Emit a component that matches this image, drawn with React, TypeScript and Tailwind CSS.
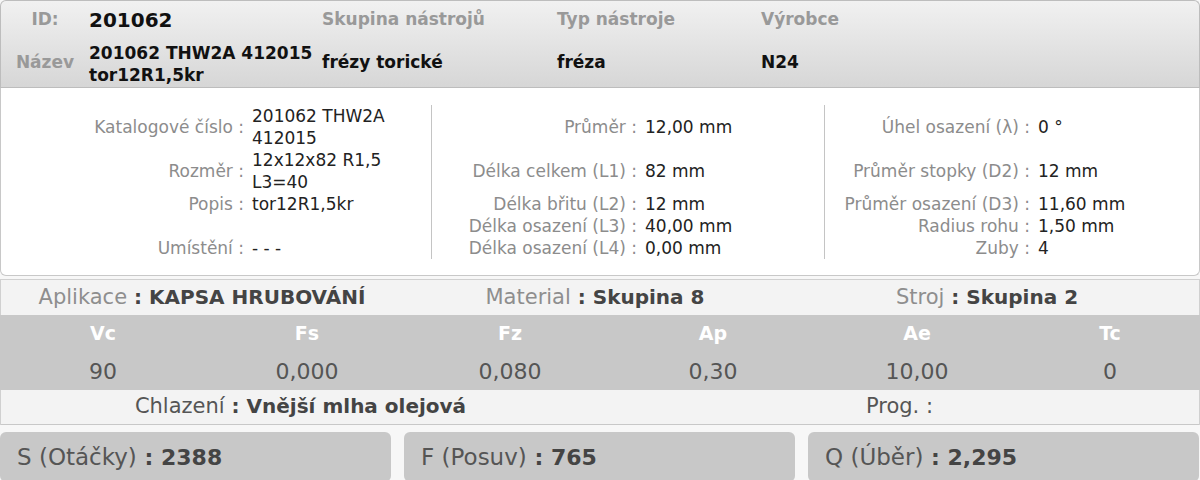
import React from 'react';

type Row = { label: string; value: string } | null;

const col1: Row[] = [
  { label: 'Katalogové číslo', value: '201062 THW2A 412015' },
  { label: 'Rozměr', value: '12x12x82 R1,5 L3=40' },
  { label: 'Popis', value: 'tor12R1,5kr' },
  null,
  { label: 'Umístění', value: '- - -' },
];

const col2: Row[] = [
  { label: 'Průměr', value: '12,00 mm' },
  { label: 'Délka celkem (L1)', value: '82 mm' },
  { label: 'Délka břitu (L2)', value: '12 mm' },
  { label: 'Délka osazení (L3)', value: '40,00 mm' },
  { label: 'Délka osazení (L4)', value: '0,00 mm' },
];

const col3: Row[] = [
  { label: 'Úhel osazení (λ)', value: '0 °' },
  { label: 'Průměr stopky (D2)', value: '12 mm' },
  { label: 'Průměr osazení (D3)', value: '11,60 mm' },
  { label: 'Radius rohu', value: '1,50 mm' },
  { label: 'Zuby', value: '4' },
];

const params = [
  { k: 'Vc', v: '90' },
  { k: 'Fs', v: '0,000' },
  { k: 'Fz', v: '0,080' },
  { k: 'Ap', v: '0,30' },
  { k: 'Ae', v: '10,00' },
  { k: 'Tc', v: '0' },
];

const DetailColumn = ({ rows, cols, border }: { rows: Row[]; cols: string; border?: boolean }) => (
  <div className={`grid ${cols} grid-rows-[44px_44px_22px_22px_22px] ${border ? 'border-l border-[#c4c4c4]' : ''}`}>
    {rows.map((r, i) =>
      r ? (
        <React.Fragment key={i}>
          <div className="flex items-center justify-end text-[#8c8c8c] whitespace-nowrap leading-[22px]">{r.label} :</div>
          <div className="flex items-center pl-2 text-[#222] leading-[22px]">
            <span className="max-w-[170px]">{r.value}</span>
          </div>
        </React.Fragment>
      ) : (
        <React.Fragment key={i}>
          <div />
          <div />
        </React.Fragment>
      )
    )}
  </div>
);

// label + bold colon + bold value, as in the lower part
const Pair = ({ label, value, labelClass }: { label: string; value?: string; labelClass: string }) => (
  <span className="whitespace-nowrap">
    <span className={labelClass}>{label}</span>
    <span className="font-bold"> : </span>
    {value && <span className="font-bold">{value}</span>}
  </span>
);

export default function App() {
  return (
    <div className="w-[1200px] bg-[#f7f7f7] font-['DejaVu_Sans',sans-serif] text-[17px]">
      {/* Header */}
      <div className="rounded-t-[6px] border border-b-0 border-[#bdbdbd] bg-gradient-to-b from-[#f1f1f1] to-[#d6d6d6] font-bold">
        <div className="grid grid-cols-[88px_233px_235px_204px_1fr] h-[38px] items-center">
          <div className="text-center text-[#999]">ID:</div>
          <div className="text-[20px] text-[#111]">201062</div>
          <div className="text-[#999]">Skupina nástrojů</div>
          <div className="text-[#999]">Typ nástroje</div>
          <div className="text-[#999]">Výrobce</div>
        </div>
        <div className="grid grid-cols-[88px_233px_235px_204px_1fr] h-[49px] items-center border-b border-[#bdbdbd] text-[#111]">
          <div className="text-center text-[#999]">Název</div>
          <div className="leading-[22px] pt-[2px]">201062 THW2A 412015<br />tor12R1,5kr</div>
          <div>frézy torické</div>
          <div>fréza</div>
          <div>N24</div>
        </div>
      </div>

      {/* Detail panel */}
      <div className="bg-white border border-t-0 border-[#c8c8c8] rounded-b-[6px] pt-[17px] pb-[16px] grid grid-cols-[430px_393px_1fr]">
        <DetailColumn rows={col1} cols="grid-cols-[243px_1fr]" />
        <DetailColumn rows={col2} cols="grid-cols-[205px_1fr]" border />
        <DetailColumn rows={col3} cols="grid-cols-[205px_1fr]" border />
      </div>

      {/* Cutting conditions */}
      <div className="mt-[3px] border-t border-x border-[#d0d0d0] bg-[#f3f3f3] text-[20px] text-[#444]">
        <div className="grid grid-cols-[402px_384px_400px_1fr] h-[35px]">
          <div className="flex items-center justify-center">
            <Pair label="Aplikace" value="KAPSA HRUBOVÁNÍ" labelClass="text-[#8e8e8e] text-[21px]" />
          </div>
          <div className="flex items-center justify-center">
            <Pair label="Material" value="Skupina 8" labelClass="text-[#8e8e8e] text-[21px]" />
          </div>
          <div className="flex items-center justify-center">
            <Pair label="Stroj" value="Skupina 2" labelClass="text-[#8e8e8e] text-[21px]" />
          </div>
          <div />
        </div>

        <div className="bg-[#c8c8c8] grid grid-cols-[206px_202px_204px_202px_206px_1fr] -mx-px">
          {params.map((p) => (
            <div key={p.k} className="flex flex-col items-center">
              <div className="h-[37px] flex items-center font-bold text-white text-[19px]">{p.k}</div>
              <div className="h-[38px] flex items-center text-[22px] text-[#555]">{p.v}</div>
            </div>
          ))}
        </div>

        <div className="grid grid-cols-2 h-[35px] border-b border-[#c8c8c8]">
          <div className="flex items-center justify-center">
            <Pair label="Chlazení" value="Vnější mlha olejová" labelClass="text-[#555] text-[21px]" />
          </div>
          <div className="flex items-center justify-center">
            <span className="text-[#555] text-[21px] whitespace-nowrap">Prog. :</span>
          </div>
        </div>
      </div>

      {/* Results */}
      <div className="grid grid-cols-3 gap-[13px] pt-[7px] pr-px">
        {[
          { l: 'S (Otáčky)', v: '2388' },
          { l: 'F (Posuv)', v: '765' },
          { l: 'Q (Úběr)', v: '2,295' },
        ].map((b) => (
          <div key={b.l} className="h-[50px] rounded-[6px] bg-[#c8c8c8] flex items-center pl-[17px] text-[22px] text-[#444]">
            <Pair label={b.l} value={b.v} labelClass="text-[#555] text-[23px]" />
          </div>
        ))}
      </div>
    </div>
  );
}
